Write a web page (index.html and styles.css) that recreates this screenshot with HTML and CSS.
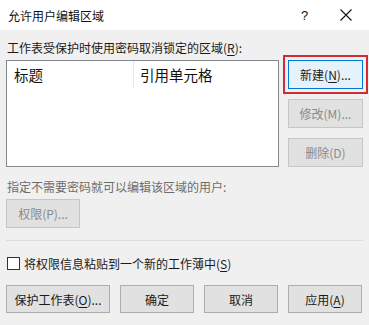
FILE: index.html
```html
<!DOCTYPE html>
<html lang="zh-CN">
<head>
<meta charset="utf-8">
<link rel="stylesheet" href="styles.css">
</head>
<body>
<div class="dialog">
  <div class="titlebar">
    <span class="title">允许用户编辑区域</span>
    <span class="help">?</span>
    <span class="close"><svg width="12" height="12" viewBox="0 0 12 12"><path d="M0.5 0.5L11.5 11.5M11.5 0.5L0.5 11.5" stroke="#111" stroke-width="1.1" fill="none"/></svg></span>
  </div>
  <div class="content">
    <div class="label">工作表受保护时使用密码取消锁定的区域(<u>R</u>):</div>
    <div class="top-row">
      <div class="listbox">
        <div class="list-head">
          <div class="col col-title">标题</div>
          <div class="col col-ref">引用单元格</div>
        </div>
      </div>
      <div class="side-buttons">
        <div class="highlight">
          <button class="btn btn-default">新建(<u>N</u>)...</button>
        </div>
        <button class="btn btn-disabled">修改(M)...</button>
        <button class="btn btn-disabled">删除(D)</button>
      </div>
    </div>
    <div class="label label-gray">指定不需要密码就可以编辑该区域的用户:</div>
    <button class="btn btn-disabled btn-perm">权限(P)...</button>
    <div class="separator"></div>
    <label class="check-row">
      <span class="checkbox"></span>
      <span>将权限信息粘贴到一个新的工作薄中(<u>S</u>)</span>
    </label>
    <div class="bottom-row">
      <button class="btn btn-wide">保护工作表(<u>O</u>)...</button>
      <button class="btn">确定</button>
      <button class="btn">取消</button>
      <button class="btn">应用(<u>A</u>)</button>
    </div>
  </div>
</div>
</body>
</html>
```

FILE: styles.css
```css
html, body {
  margin: 0;
  padding: 0;
}
body {
  width: 369px;
  height: 325px;
  overflow: hidden;
  background: #f0f0f0;
  font-family: "Noto Sans CJK SC", "Microsoft YaHei", "Liberation Sans", sans-serif;
  font-size: 12px;
  color: #1a1a1a;
}
.dialog {
  width: 369px;
  height: 325px;
  display: flex;
  flex-direction: column;
}
.titlebar {
  height: 30px;
  background: #ffffff;
  display: flex;
  align-items: center;
  padding-left: 8px;
  box-sizing: border-box;
}
.title {
  flex: 1;
  font-size: 12px;
  color: #111;
}
.help {
  width: 10px;
  margin-right: 29px;
  font-family: "Liberation Sans", sans-serif;
  font-size: 13px;
  color: #111;
}
.close {
  width: 12px;
  height: 12px;
  margin-right: 17px;
  display: flex;
}
.content {
  padding: 9px 6px 0 6px;
  display: flex;
  flex-direction: column;
}
.label {
  padding-left: 1px;
  height: 17px;
  line-height: 17px;
  white-space: nowrap;
}
.label-gray {
  color: #6d6d6d;
  margin-top: 11px;
}
u {
  text-decoration: underline;
  text-underline-offset: 2px;
}
.top-row {
  display: flex;
  margin-top: 4px;
}
.listbox {
  width: 273px;
  height: 107px;
  box-sizing: border-box;
  background: #ffffff;
  border: 1px solid #828790;
}
.list-head {
  display: flex;
  height: 27px;
}
.col {
  line-height: 27px;
  padding-left: 7px;
  color: #111;
  font-size: 14.5px;
}
.col-title {
  width: 119px;
  border-right: 1px solid #e8e8e8;
}
.col-ref {
  padding-left: 6px;
}
.side-buttons {
  display: flex;
  flex-direction: column;
  gap: 10px;
  margin-left: 9px;
}
.btn {
  width: 75px;
  height: 29px;
  box-sizing: border-box;
  border: 1px solid #adadad;
  background: #e1e1e1;
  font-family: inherit;
  font-size: 12px;
  color: #1a1a1a;
  padding: 0;
  margin: 0;
}
.btn-default {
  background: #e5f1fb;
  border: 1px solid #0078d7;
}
.btn-disabled {
  background: #e1e1e1;
  border-color: #c6c6c6;
  color: #8a8a8a;
}
.highlight {
  position: relative;
  height: 29px;
}
.highlight::after {
  content: "";
  position: absolute;
  left: -5px;
  top: -5px;
  right: -5px;
  bottom: -5px;
  border: 2px solid #d42a31;
  pointer-events: none;
}
.btn-perm {
  margin-top: 4px;
  width: 74px;
  height: 29px;
}
.separator {
  margin-top: 12px;
  height: 1px;
  width: 357px;
  background: #dcdcdc;
}
.check-row {
  display: flex;
  align-items: center;
  margin-top: 15px;
  padding-left: 1px;
  height: 14px;
  white-space: nowrap;
}
.checkbox {
  width: 13px;
  height: 13px;
  box-sizing: border-box;
  border: 1px solid #333;
  background: #fff;
  margin-right: 4px;
}
.bottom-row {
  display: flex;
  gap: 10px;
  margin-top: 15px;
}
.bottom-row .btn {
  width: 74px;
  height: 28px;
}
.bottom-row .btn-wide {
  width: 104px;
}
```
